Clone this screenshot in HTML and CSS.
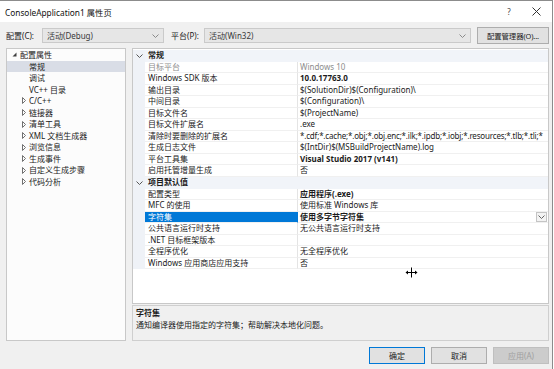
FILE: index.html
```html
<!DOCTYPE html>
<html lang="zh">
<head>
<meta charset="utf-8">
<title>ConsoleApplication1 属性页</title>
<link rel="stylesheet" href="styles.css">
</head>
<body>
<div class="win">
  <div class="titlebar">
    <span class="title">ConsoleApplication1 属性页</span>
    <span class="help">?</span>
    <span class="close"><svg width="9" height="9" viewBox="0 0 9 9"><path d="M0.5 0.5L8.5 8.5M8.5 0.5L0.5 8.5" stroke="#333" stroke-width="1" fill="none"/></svg></span>
  </div>

  <div class="cfg">
    <span class="lbl lbl-c">配置(C):</span>
    <div class="combo combo-c"><span>活动(Debug)</span><svg class="arr" width="7" height="4" viewBox="0 0 7 4"><path d="M0.5 0.5L3.5 3.5L6.5 0.5" stroke="#8a8a8a" fill="none"/></svg></div>
    <span class="lbl lbl-p">平台(P):</span>
    <div class="combo combo-p"><span>活动(Win32)</span><svg class="arr" width="7" height="4" viewBox="0 0 7 4"><path d="M0.5 0.5L3.5 3.5L6.5 0.5" stroke="#8a8a8a" fill="none"/></svg></div>
    <button class="btn mgr">配置管理器(O)...</button>
  </div>

  <div class="main">
    <ul class="tree">
      <li class="ti top"><span class="exp"><svg width="5" height="5" viewBox="0 0 5 5"><path d="M4.5 0.5V4.5H0.5Z" fill="#404040"/></svg></span>配置属性</li>
      <li class="ti sub sel"><span class="exp"></span>常规</li>
      <li class="ti sub"><span class="exp"></span>调试</li>
      <li class="ti sub"><span class="exp"></span>VC++ 目录</li>
      <li class="ti sub"><span class="exp"><svg width="4" height="7" viewBox="0 0 4 7"><path d="M0.5 0.5L3.5 3.5L0.5 6.5Z" stroke="#707070" fill="none"/></svg></span>C/C++</li>
      <li class="ti sub"><span class="exp"><svg width="4" height="7" viewBox="0 0 4 7"><path d="M0.5 0.5L3.5 3.5L0.5 6.5Z" stroke="#707070" fill="none"/></svg></span>链接器</li>
      <li class="ti sub"><span class="exp"><svg width="4" height="7" viewBox="0 0 4 7"><path d="M0.5 0.5L3.5 3.5L0.5 6.5Z" stroke="#707070" fill="none"/></svg></span>清单工具</li>
      <li class="ti sub"><span class="exp"><svg width="4" height="7" viewBox="0 0 4 7"><path d="M0.5 0.5L3.5 3.5L0.5 6.5Z" stroke="#707070" fill="none"/></svg></span>XML 文档生成器</li>
      <li class="ti sub"><span class="exp"><svg width="4" height="7" viewBox="0 0 4 7"><path d="M0.5 0.5L3.5 3.5L0.5 6.5Z" stroke="#707070" fill="none"/></svg></span>浏览信息</li>
      <li class="ti sub"><span class="exp"><svg width="4" height="7" viewBox="0 0 4 7"><path d="M0.5 0.5L3.5 3.5L0.5 6.5Z" stroke="#707070" fill="none"/></svg></span>生成事件</li>
      <li class="ti sub"><span class="exp"><svg width="4" height="7" viewBox="0 0 4 7"><path d="M0.5 0.5L3.5 3.5L0.5 6.5Z" stroke="#707070" fill="none"/></svg></span>自定义生成步骤</li>
      <li class="ti sub"><span class="exp"><svg width="4" height="7" viewBox="0 0 4 7"><path d="M0.5 0.5L3.5 3.5L0.5 6.5Z" stroke="#707070" fill="none"/></svg></span>代码分析</li>
    </ul>

    <div class="right">
      <div class="grid">
        <div class="row cat"><span class="g"><svg width="7" height="4" viewBox="0 0 7 4"><path d="M0.5 0.5L3.5 3.5L6.5 0.5" stroke="#555" fill="none"/></svg></span><span class="cn">常规</span></div>
        <div class="row dim"><span class="g"></span><span class="n">目标平台</span><span class="v">Windows 10</span></div>
        <div class="row"><span class="g"></span><span class="n">Windows SDK 版本</span><span class="v b">10.0.17763.0</span></div>
        <div class="row"><span class="g"></span><span class="n">输出目录</span><span class="v">$(SolutionDir)$(Configuration)\</span></div>
        <div class="row"><span class="g"></span><span class="n">中间目录</span><span class="v">$(Configuration)\</span></div>
        <div class="row"><span class="g"></span><span class="n">目标文件名</span><span class="v">$(ProjectName)</span></div>
        <div class="row"><span class="g"></span><span class="n">目标文件扩展名</span><span class="v">.exe</span></div>
        <div class="row"><span class="g"></span><span class="n">清除时要删除的扩展名</span><span class="v tight">*.cdf;*.cache;*.obj;*.obj.enc;*.ilk;*.ipdb;*.iobj;*.resources;*.tlb;*.tli;*</span></div>
        <div class="row"><span class="g"></span><span class="n">生成日志文件</span><span class="v">$(IntDir)$(MSBuildProjectName).log</span></div>
        <div class="row"><span class="g"></span><span class="n">平台工具集</span><span class="v b">Visual Studio 2017 (v141)</span></div>
        <div class="row"><span class="g"></span><span class="n">启用托管增量生成</span><span class="v">否</span></div>
        <div class="row cat"><span class="g"><svg width="7" height="4" viewBox="0 0 7 4"><path d="M0.5 0.5L3.5 3.5L6.5 0.5" stroke="#555" fill="none"/></svg></span><span class="cn">项目默认值</span></div>
        <div class="row"><span class="g"></span><span class="n">配置类型</span><span class="v b">应用程序(.exe)</span></div>
        <div class="row"><span class="g"></span><span class="n">MFC 的使用</span><span class="v">使用标准 Windows 库</span></div>
        <div class="row sel"><span class="g"></span><span class="n">字符集</span><span class="v b">使用多字节字符集<span class="dd"><svg width="7" height="4" viewBox="0 0 7 4"><path d="M0.5 0.5L3.5 3.5L6.5 0.5" stroke="#666" fill="none"/></svg></span></span></div>
        <div class="row"><span class="g"></span><span class="n">公共语言运行时支持</span><span class="v">无公共语言运行时支持</span></div>
        <div class="row"><span class="g"></span><span class="n">.NET 目标框架版本</span><span class="v"></span></div>
        <div class="row"><span class="g"></span><span class="n">全程序优化</span><span class="v">无全程序优化</span></div>
        <div class="row"><span class="g"></span><span class="n">Windows 应用商店应用支持</span><span class="v">否</span></div>
      </div>
      <div class="desc">
        <div class="dt">字符集</div>
        <div class="dd-text">通知编译器使用指定的字符集；帮助解决本地化问题。</div>
      </div>
    </div>
  </div>

  <div class="actions">
    <button class="btn act def">确定</button>
    <button class="btn act">取消</button>
    <button class="btn act off" disabled>应用(A)</button>
  </div>

  <svg class="cursor" width="13" height="11" viewBox="0 0 13 11">
    <path d="M6.5 0V11" stroke="#fff" stroke-width="3"/>
    <path d="M1 5.5H12" stroke="#fff" stroke-width="3"/>
    <path d="M6.5 0.5V10.5M1 5.5H12" stroke="#000" stroke-width="1"/>
    <path d="M3 3.5L0.5 5.5L3 7.5ZM10 3.5L12.5 5.5L10 7.5Z" fill="#000"/>
  </svg>
</div>
</body>
</html>
```

FILE: styles.css
```css
* { box-sizing: border-box; }
html, body { margin: 0; padding: 0; }
body {
  width: 554px;
  height: 369px;
  overflow: hidden;
  background: #fff;
  font-family: "Noto Sans", "Noto Sans CJK SC", sans-serif;
  font-size: 8px;
  color: #1b1b1b;
}
.win {
  position: relative;
  width: 553px;
  height: 369px;
  border-top: 1px solid #8c8c8c;
  border-right: 1px solid #8c8c8c;
  background: #f0f0f0;
  display: flex;
  flex-direction: column;
}
.titlebar {
  height: 21px;
  background: #fff;
  display: flex;
  align-items: center;
  padding-left: 5px;
}
.title { flex: 1; font-size: 8.3px; color: #111; }
.help { width: 30px; font-size: 8px; color: #444; text-align: center; margin-right: 2px; }
.close { width: 20px; display: flex; justify-content: center; margin-right: 6px; }

.cfg {
  display: flex;
  align-items: center;
  height: 17px;
  margin-top: 5px;
  padding-left: 6px;
}
.lbl { color: #1b1b1b; }
.lbl-c { width: 36px; }
.lbl-p { width: 33px; margin-left: 7px; }
.combo {
  height: 15px;
  display: flex;
  align-items: center;
  justify-content: space-between;
  padding: 0 4px 0 4px;
  background: #e6e6e6;
  border: 1px solid #cacaca;
  color: #3a3a3a;
}
.combo-c { width: 122px; }
.combo-p { width: 267px; }
.arr { display: block; }
.btn {
  font-family: inherit;
  font-size: 8px;
  color: #1b1b1b;
  background: #e1e1e1;
  border: 1px solid #adadad;
  padding: 0;
  margin: 0;
}
.mgr {
  width: 72px;
  height: 17px;
  margin-left: 6px;
  font-size: 7.4px;
  white-space: nowrap;
  letter-spacing: -0.1px;
}

.main {
  display: flex;
  gap: 6px;
  height: 293px;
  margin-top: 4px;
  padding-left: 6px;
}
.tree {
  list-style: none;
  margin: 0;
  padding: 0;
  width: 120px;
  background: #fcfcfc;
  border: 1px solid #c8c8c8;
}
.ti {
  height: 11.55px;
  line-height: 11.55px;
  display: flex;
  align-items: center;
  white-space: nowrap;
}
.exp { display: flex; align-items: center; }
.top { padding-left: 5px; }
.top .exp { width: 8px; }
.sub { padding-left: 15px; }
.sub .exp { width: 7px; }
.sel.ti { background: #d9dde6; }

.right {
  width: 417px;
  display: flex;
  flex-direction: column;
  gap: 1px;
}
.grid {
  height: 256px;
  background: #fff;
  border: 1px solid #c8c8c8;
  padding-top: 1px;
  overflow: hidden;
}
.row {
  display: grid;
  grid-template-columns: 12px 153px 1fr;
  height: 11.55px;
  line-height: 10.55px;
  white-space: nowrap;
}
.g {
  background: #eff2f7;
  display: flex;
  align-items: center;
  justify-content: center;
}
.n {
  padding-left: 3px;
  border-right: 1px solid #e4e4e4;
  border-bottom: 1px solid #f0f0f0;
  overflow: hidden;
}
.v {
  padding-left: 2px;
  border-bottom: 1px solid #f0f0f0;
  overflow: hidden;
  display: flex;
  align-items: center;
  justify-content: space-between;
}
.tight { letter-spacing: -0.18px; }
.b { font-weight: bold; }
.dim .n, .dim .v { color: #8d8d8d; }
.cat { background: #f1f4f9; }
.cat .cn {
  grid-column: 2 / 4;
  padding-left: 3px;
  font-weight: bold;
}
.row.sel .n { background: #0078d7; color: #fff; border-right-color: #0078d7; }
.dd {
  width: 11px;
  height: 10px;
  margin-right: 1px;
  border: 1px solid #c4c4c4;
  background: #f3f3f3;
  display: flex;
  align-items: center;
  justify-content: center;
}

.desc {
  flex: 1;
  border: 1px solid #cfcfcf;
  background: #f0f0f0;
  padding: 0 3px;
}
.dt { font-weight: bold; height: 13px; line-height: 13px; }
.dd-text { height: 12px; line-height: 12px; }

.actions {
  display: flex;
  justify-content: flex-end;
  gap: 6px;
  margin-top: 6px;
  padding-right: 3px;
}
.act { width: 56px; height: 17px; }
.def { border-color: #0078d7; }
.off { background: #cccccc; border-color: #bfbfbf; color: #a0a0a0; }

.cursor {
  position: absolute;
  left: 405px;
  top: 266px;
}
```
